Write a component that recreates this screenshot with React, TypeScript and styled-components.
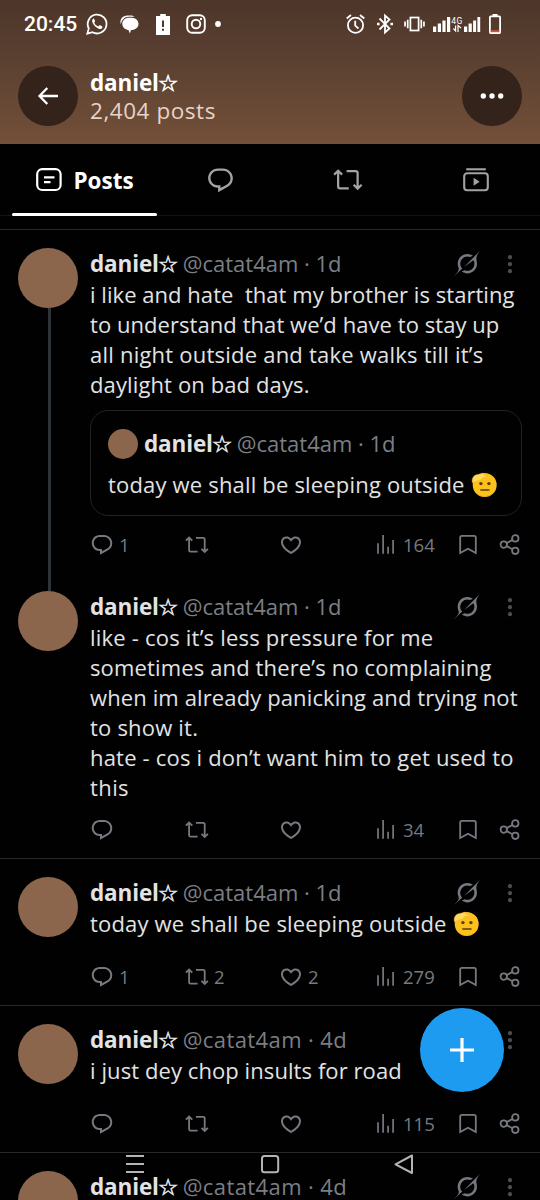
import React from "react";
import styled, { createGlobalStyle } from "styled-components";

const Global = createGlobalStyle`
  * { box-sizing: border-box; }
  html, body { margin: 0; padding: 0; background: #010101; }
  body { overflow: hidden; font-family: "Open Sans", "Noto Sans", sans-serif; }
  svg { display: block; flex: none; overflow: visible; }
  button { border: 0; padding: 0; background: none; color: inherit; font: inherit; }
`;

const Screen = styled.div`
  position: relative;
  width: 540px;
  height: 1200px;
  overflow: hidden;
  background: #010101;
  color: #e2e3e4;
`;

const Banner = styled.header`
  height: 144px;
  background: linear-gradient(#4c3529, #5a4031 40%, #735039);
  color: #fff;
`;

const StatusBar = styled.div`
  height: 48px;
  padding: 0 39px 0 24px;
  display: flex;
  align-items: center;
`;

const Clock = styled.span`
  width: 62px;
  padding-top: 1px;
  font: 500 21px/47px Roboto, sans-serif;
`;

const StatusSlot = styled.div<{ $width: number }>`
  width: ${(p) => p.$width}px;
`;

const Spacer = styled.div`
  flex: 1;
`;

const TitleRow = styled.div`
  padding: 18px 18px 0;
  display: flex;
  align-items: center;
`;

const RoundButton = styled.button`
  width: 60px;
  height: 60px;
  border-radius: 50%;
  background: #33231a;
  color: #fff;
  display: grid;
  place-items: center;
`;

const Titles = styled.div`
  flex: 1;
  padding: 1px 0 0 12px;
  line-height: 28px;
  height: 56px;
`;

const PostCount = styled.div`
  font-size: 22.5px;
  line-height: 27px;
  letter-spacing: 0.55px;
  color: #e6d3c9;
`;

const Tabs = styled.nav`
  height: 72px;
  display: grid;
  grid-template-columns: 156px 128px 128px 128px;
  border-bottom: 1px solid #121212;
  margin-bottom: 13px;
`;

const Tab = styled.div<{ $active?: boolean }>`
  position: relative;
  display: flex;
  align-items: center;
  justify-content: center;
  padding-left: ${(p) => (p.$active ? 14 : 0)}px;
  padding-top: 1px;
  gap: 11px;
  color: ${(p) => (p.$active ? "#fff" : "#a3a3a3")};
  font-size: 22.5px;
  font-weight: 700;
`;

const TabIndicator = styled.span`
  position: absolute;
  left: 12px;
  right: -1px;
  bottom: -1px;
  height: 3px;
  border-radius: 2px;
  background: #fff;
`;

const Post = styled.article<{ $continued?: boolean }>`
  display: flex;
  gap: 12px;
  padding: 0 18px 0;
  border-top: ${(p) => (p.$continued ? "0" : "1px solid #27282a")};
`;

const Rail = styled.div`
  width: 60px;
  padding-top: 18px;
  flex: none;
  display: flex;
  flex-direction: column;
  align-items: center;
`;

const Avatar = styled.div<{ $size: number }>`
  width: ${(p) => p.$size}px;
  height: ${(p) => p.$size}px;
  flex: none;
  border-radius: 50%;
  background: #8b664c;
`;

const ThreadLine = styled.div`
  flex: 1;
  width: 3px;
  margin-left: 3px;
  margin-bottom: -18px;
  background: #2f3336;
`;

const Body = styled.div`
  width: 432px;
  padding: 18px 0 16px;
`;

const NameRow = styled.div`
  height: 32px;
  display: flex;
  align-items: center;
  white-space: pre;
`;

const NameText = styled.span<{ $bright?: boolean }>`
  display: flex;
  align-items: center;
  font-size: 22.5px;
  line-height: 28px;
  font-weight: 700;
  letter-spacing: -0.15px;
  color: ${(p) => (p.$bright ? "#fff" : "#e2e3e4")};
`;

const Star = styled.span`
  width: 19px;
  margin-left: -1px;
  font: 400 23px/28px "DejaVu Sans", sans-serif;
  -webkit-text-stroke: 0.6px currentColor;
`;

const Handle = styled.span<{ $ls?: number }>`
  margin-left: 6px;
  padding-bottom: 2px;
  font-size: 22px;
  line-height: 28px;
  letter-spacing: ${(p) => p.$ls ?? 0}px;
  color: #7b7f85;
`;

const RowTools = styled.div`
  margin-left: auto;
  margin-right: 9px;
  padding-bottom: 1px;
  display: flex;
  align-items: center;
  gap: 27px;
  color: #767a80;
`;

const Line = styled.div<{ $ls?: number }>`
  height: 30px;
  padding-bottom: 2px;
  display: flex;
  align-items: center;
  font-size: 22px;
  line-height: 28px;
  white-space: pre;
  letter-spacing: ${(p) => p.$ls ?? 0}px;
`;

const QuoteCard = styled.div`
  margin-top: 10px;
  height: 106px;
  padding: 17px 17px 0;
  border: 1px solid #202224;
  border-radius: 18px;
`;

const QuoteAvatar = styled.div`
  margin-right: 6px;
`;

const QuoteText = styled.div`
  margin-top: 10px;
`;

const Actions = styled.div<{ $top: number }>`
  margin-top: ${(p) => p.$top}px;
  height: 24px;
  display: grid;
  grid-template-columns: 95px 94px 95px 82px 42px 24px;
  color: #767a80;
`;

const Action = styled.div`
  display: flex;
  align-items: center;
  gap: 5px;
  font-size: 18.5px;
  line-height: 24px;
`;

const Fab = styled.button`
  position: absolute;
  left: 420px;
  top: 1008px;
  width: 84px;
  height: 84px;
  border-radius: 50%;
  background: #1d9bf0;
  display: grid;
  place-items: center;
`;

const SystemNav = styled.div`
  position: absolute;
  left: 125px;
  right: 126px;
  bottom: 25px;
  display: flex;
  justify-content: space-between;
  color: #b4b4b4;
`;

type IconProps = { size?: number };

const ReplyIcon = ({ size = 24 }: IconProps) => (
  <svg width={size} height={size} viewBox="0 0 24 24" fill="currentColor">
    <path d="M1.751 10c0-4.42 3.584-8 8.005-8h4.366c4.49 0 8.129 3.64 8.129 8.13 0 2.96-1.607 5.68-4.196 7.11l-8.054 4.46v-3.69h-.067c-4.49.1-8.183-3.51-8.183-8.01zm8.005-6c-3.317 0-6.005 2.69-6.005 6 0 3.37 2.77 6.08 6.138 6.01l.351-.01h1.761v2.3l5.087-2.81c1.951-1.08 3.163-3.13 3.163-5.36 0-3.39-2.744-6.13-6.129-6.13H9.756z" />
  </svg>
);

const RepostIcon = ({ size = 24 }: IconProps) => (
  <svg width={size} height={size} viewBox="0 0 24 24" fill="none" stroke="currentColor" strokeWidth="1.8">
    <path d="M.9 7.7l3.2-3.1 3.2 3.1M4.1 5v12.2c0 .9.6 1.5 1.5 1.5h7" />
    <path d="M22.9 15.8l-3.2 3.1-3.2-3.1M19.7 18.5V6.3c0-.9-.6-1.5-1.5-1.5h-7.3" />
  </svg>
);

const HeartIcon = () => (
  <svg width="24" height="24" viewBox="0 0 24 24" fill="currentColor">
    <path d="M16.697 5.5c-1.222-.06-2.679.51-3.89 2.16l-.805 1.09-.806-1.09C9.984 6.01 8.526 5.44 7.304 5.5c-1.243.07-2.349.78-2.91 1.91-.552 1.12-.633 2.78.479 4.82 1.074 1.97 3.257 4.27 7.129 6.61 3.87-2.34 6.052-4.64 7.126-6.61 1.111-2.04 1.03-3.7.477-4.82-.561-1.13-1.666-1.84-2.908-1.91zm4.187 7.69c-1.351 2.48-4.001 5.12-8.379 7.67l-.503.3-.504-.3c-4.379-2.55-7.029-5.19-8.382-7.67-1.36-2.5-1.41-4.86-.514-6.67.887-1.79 2.647-2.91 4.601-3.01 1.651-.09 3.368.56 4.798 2.01 1.429-1.45 3.146-2.1 4.796-2.01 1.954.1 3.714 1.22 4.601 3.01.896 1.81.846 4.17-.514 6.67z" />
  </svg>
);

const ViewsIcon = () => (
  <svg width="24" height="24" viewBox="0 0 24 24" fill="none" stroke="currentColor" strokeWidth="1.7">
    <path d="M4 10.2v10.6M9.1 2v18.8M14.1 13.8v7M19.1 7v13.8" />
  </svg>
);

const BookmarkIcon = () => (
  <svg width="24" height="24" viewBox="0 0 24 24" fill="none" stroke="currentColor" strokeWidth="1.8">
    <path d="M4.2 20V4.6c0-1 .7-1.7 1.7-1.7h12.2c1 0 1.7.7 1.7 1.7V20L12 15.7z" />
  </svg>
);

const ShareIcon = () => (
  <svg width="24" height="24" viewBox="0 0 24 24" fill="none" stroke="currentColor" strokeWidth="1.8">
    <circle cx="5.8" cy="11.6" r="3.2" />
    <circle cx="17.3" cy="5.4" r="3.2" />
    <circle cx="17.3" cy="17.8" r="3.2" />
    <path d="M8.7 10.1l5.7-3.1M8.7 13.1l5.7 3.1" />
  </svg>
);

const GrokIcon = () => (
  <svg width="26" height="25" viewBox="0 0 33 32" fill="currentColor">
    <path d="M12.745 20.54l10.97-8.19c.539-.4 1.307-.244 1.564.38 1.349 3.288.746 7.241-1.938 9.955-2.683 2.714-6.417 3.31-9.83 1.954l-3.728 1.745c5.347 3.697 11.84 2.782 15.898-1.324 3.219-3.255 4.216-7.692 3.284-11.693l.008.009c-1.351-5.878.332-8.227 3.782-13.031L33 0l-4.54 4.59v-.014L12.743 20.544m-2.263 1.987c-3.837-3.707-3.175-9.446.1-12.755 2.42-2.449 6.388-3.448 9.852-1.979l3.72-1.737c-.67-.49-1.53-1.017-2.515-1.387-4.455-1.854-9.789-.931-13.41 2.728-3.483 3.523-4.579 8.94-2.697 13.561 1.405 3.454-.899 5.898-3.22 8.364C1.49 30.2.666 31.074 0 32l10.478-9.466" />
  </svg>
);

const KebabIcon = () => (
  <svg width="6" height="20" viewBox="0 0 6 20" fill="#4b4e52">
    <circle cx="3" cy="3.2" r="2.1" />
    <circle cx="3" cy="10.2" r="2.1" />
    <circle cx="3" cy="17.2" r="2.1" />
  </svg>
);

const PostsIcon = () => (
  <svg width="26" height="24" viewBox="0 0 26 24" fill="none" stroke="currentColor" strokeWidth="2.2">
    <rect x="1.2" y="1.2" width="23.4" height="20.8" rx="5" />
    <path d="M8 9.4h10.5M8 14.2h6.5" />
  </svg>
);

const MediaIcon = () => (
  <svg width="26" height="24" viewBox="0 0 26 24" fill="none" stroke="currentColor" strokeWidth="2.1">
    <path d="M3.200 1.300h19.600" />
    <rect x="1.2" y="5.3" width="23.6" height="17" rx="3" />
    <path d="M10.600 9.700v8l6-4z" fill="currentColor" stroke="none" />
  </svg>
);

const SaluteEmoji = () => (
  <svg width="27" height="26" viewBox="0 0 27 26">
    <circle cx="13.7" cy="14" r="12" fill="#fcc21b" />
    <path d="M3.500 20a12 12 0 0 0 21.400-2.200A12.400 12.400 0 0 1 3.500 20z" fill="#f2a412" />
    <circle cx="9.900" cy="12.600" r="1.700" fill="#5a3b10" />
    <circle cx="17.900" cy="12.600" r="1.700" fill="#5a3b10" />
    <path d="M9.800 19h8.200" stroke="#5a3b10" strokeWidth="1.400" strokeLinecap="round" />
    <path d="M1.500 11.800C.5 8.400 1.800 5.400 4.700 4L11.900 2.200c1.100-.1 1.400.8.600 1.300l2.800.9c.9.500.5 1.400-.4 1.500l-3 .6c-1.500 2.700-4 3.300-6.800 4z" fill="#ffd95a" stroke="#f0ae24" strokeWidth=".5" />
  </svg>
);

const WhatsAppIcon = () => (
  <svg width="22" height="22" viewBox="0 0 22 22" fill="none" stroke="currentColor">
    <path d="M1.300 20.700l1.500-5.300a9.400 9.400 0 1 1 3.700 3.800z" strokeWidth="1.800" />
    <path d="M7.400 5.600c-1.200.8-1.700 2.200-.9 4 1.200 2.900 3.300 5 6.200 6.100 1.800.6 3.100.1 3.700-1.300.2-.6.100-.9-.4-1.200l-1.900-.9c-.4-.2-.7-.1-1 .3l-.8 1c-1.900-.8-3.200-2-4.100-3.800l.7-1c.2-.3.2-.6.100-.9l-.8-1.900c-.2-.4-.4-.5-.8-.4z" fill="currentColor" stroke="none" />
  </svg>
);

const ChatIcon = () => (
  <svg width="19" height="20" viewBox="0 0 19 20" fill="currentColor">
    <path d="M.9 10.300C-.8 5.500 2.500 1.500 7.500 1.500h3c1.500 0 3 .5 4 1.300H8.500C4.500 2.800 1.600 6 .9 10.300z" />
    <path d="M8.700 3.700h3.100c3.800 0 6.700 2.800 6.700 6.100 0 3.500-2.800 6-6 6.100H11l-1.100 3.600-1.500-3.600C4.900 15.600 2.300 13 2.300 9.800c0-3.400 2.900-6.100 6.400-6.100z" />
  </svg>
);

const BatteryAlertIcon = () => (
  <svg width="14" height="21" viewBox="0 0 14 21">
    <path d="M4.200 0h5.600v2H14v19H0V2h4.200z" fill="#fff" />
    <path d="M7 6.500v6.500M7 14.800v2" stroke="#4f382b" strokeWidth="2" />
  </svg>
);

const InstagramIcon = () => (
  <svg width="20" height="20" viewBox="0 0 20 20" fill="none" stroke="currentColor" strokeWidth="1.900">
    <rect x="1.200" y="1.200" width="17.600" height="17.600" rx="5" />
    <circle cx="10" cy="10" r="4.300" />
    <circle cx="15" cy="5" r="1.200" fill="currentColor" stroke="none" />
  </svg>
);

const DotIcon = () => (
  <svg width="6" height="6" viewBox="0 0 6 6">
    <circle cx="3" cy="3" r="2.900" fill="#fff" />
  </svg>
);

const AlarmIcon = () => (
  <svg width="19" height="20" viewBox="0 0 19 20" fill="none" stroke="currentColor" strokeWidth="1.800">
    <circle cx="9.500" cy="11.200" r="7.600" />
    <path d="M9.200 6.800v4.900l3.300 2.800M.7 4.500L5 1M18.300 4.500L14 1" />
  </svg>
);

const BluetoothIcon = () => (
  <svg width="16" height="20" viewBox="0 0 16 20" fill="none" stroke="currentColor" strokeWidth="1.800">
    <path d="M2.500 4.500l10 10-4.500 4V1.500l4.500 4-10 10" />
    <path d="M0 10h2.600M13.400 10H16" strokeWidth="2.400" />
  </svg>
);

const VibrateIcon = () => (
  <svg width="21" height="18" viewBox="0 0 22 18" fill="none" stroke="currentColor" strokeWidth="1.800">
    <rect x="6.700" y="2.200" width="8.600" height="13.600" />
    <path d="M3.900 4.500v9M18.100 4.500v9M1.100 6.500v5M20.900 6.500v5" />
  </svg>
);

const SignalIcon = () => (
  <svg width="48" height="20" viewBox="0 0 48 20" fill="currentColor">
    <path d="M0 12.500h3.200v5.500H0zM4.800 9.500H8V18H4.800zM9.400 6.500h3.200V18H9.400zM14 3h3.200v15H14z" />
    <path d="M31 12.500h3.200v5.500H31zM35.600 9.500h3.200V18h-3.200zM40.100 6.500h3V18h-3zM44.400 3h2.800v15h-2.800z" />
    <text x="18.200" y="10" fontFamily="Roboto, sans-serif" fontSize="8.500" textLength="11">4G</text>
    <path d="M20.400 14.500l2.200 2.500v-5.500M25 18v-6.500l3 2.500" fill="none" stroke="currentColor" strokeWidth="1.200" />
  </svg>
);

const BatteryLowIcon = () => (
  <svg width="12" height="20" viewBox="0 0 12 20">
    <path d="M3.500 0h5v2h-5z" fill="#fff" />
    <rect x=".9" y="2.400" width="10.200" height="16.600" rx=".8" fill="none" stroke="#fff" strokeWidth="1.800" />
    <path d="M1.800 16.200h8.400v2H1.800z" fill="#c9563f" />
  </svg>
);

const BackIcon = () => (
  <svg width="20" height="18" viewBox="0 0 20 18" fill="none" stroke="currentColor" strokeWidth="2.300">
    <path d="M20 9H1.500M9.300 1L1.500 9l7.800 8" />
  </svg>
);

const MoreIcon = () => (
  <svg width="24" height="6" viewBox="0 0 24 6" fill="currentColor">
    <circle cx="3.300" cy="3" r="2.700" />
    <circle cx="12" cy="3" r="2.700" />
    <circle cx="20.700" cy="3" r="2.700" />
  </svg>
);

const PlusIcon = () => (
  <svg width="24" height="24" viewBox="0 0 24 24" stroke="#fff" strokeWidth="3.200">
    <path d="M0 12h24M12 0v24" />
  </svg>
);

const MenuKey = () => (
  <svg width="20" height="22" viewBox="0 0 20 22" stroke="currentColor" strokeWidth="2">
    <path d="M1 3h18M1 11h18M1 19h18" />
  </svg>
);

const HomeKey = () => (
  <svg width="20" height="22" viewBox="0 0 20 22" fill="none" stroke="currentColor" strokeWidth="2">
    <rect x="2" y="3" width="16.200" height="16.200" rx="2.500" />
  </svg>
);

const BackKey = () => (
  <svg width="20" height="22" viewBox="0 0 20 22" fill="none" stroke="currentColor" strokeWidth="2" strokeLinejoin="round">
    <path d="M18 2.500v17.500L1.500 11.300z" />
  </svg>
);

const Name = ({ bright }: { bright?: boolean }) => (
  <NameText $bright={bright}>
    daniel<Star>☆</Star>
  </NameText>
);

const PostHeader = ({ age, ls }: { age: string; ls?: number }) => (
  <NameRow>
    <Name />
    <Handle $ls={ls}>@catat4am · {age}</Handle>
    <RowTools>
      <GrokIcon />
      <KebabIcon />
    </RowTools>
  </NameRow>
);

type Counts = { replies?: string; reposts?: string; likes?: string; views: string };

const ActionBar = ({ top, replies, reposts, likes, views }: Counts & { top: number }) => (
  <Actions $top={top}>
    <Action><ReplyIcon />{replies}</Action>
    <Action><RepostIcon />{reposts}</Action>
    <Action><HeartIcon />{likes}</Action>
    <Action><ViewsIcon />{views}</Action>
    <Action><BookmarkIcon /></Action>
    <Action><ShareIcon /></Action>
  </Actions>
);

type TextLine = { text: string; ls?: number; salute?: boolean };

type PostData = {
  age: string;
  handleSpacing?: number;
  lines: TextLine[];
  counts: Counts;
  gap: number;
  thread?: boolean;
  continued?: boolean;
  quote?: { age: string; line: TextLine };
};

const TextRow = ({ line }: { line: TextLine }) => (
  <Line $ls={line.ls}>
    {line.text}
    {line.salute && <SaluteEmoji />}
  </Line>
);

const posts: PostData[] = [
  {
    age: "1d",
    thread: true,
    gap: 17,
    lines: [
      { text: "i like and hate  that my brother is starting", ls: 0.04 },
      { text: "to understand that we’d have to stay up", ls: 0.06 },
      { text: "all night outside and take walks till it’s", ls: 0.22 },
      { text: "daylight on bad days.", ls: 0.12 },
    ],
    quote: { age: "1d", line: { text: "today we shall be sleeping outside ", ls: 0.18, salute: true } },
    counts: { replies: "1", views: "164" },
  },
  {
    age: "1d",
    continued: true,
    gap: 15,
    lines: [
      { text: "like - cos it’s less pressure for me", ls: 0.21 },
      { text: "sometimes and there’s no complaining", ls: 0.14 },
      { text: "when im already panicking and trying not", ls: 0.12 },
      { text: "to show it.", ls: 0.2 },
      { text: "hate - cos i don’t want him to get used to", ls: 0.19 },
      { text: "this", ls: 0.4 },
    ],
    counts: { views: "34" },
  },
  {
    age: "1d",
    gap: 26,
    lines: [{ text: "today we shall be sleeping outside ", ls: 0.18, salute: true }],
    counts: { replies: "1", reposts: "2", likes: "2", views: "279" },
  },
  {
    age: "4d",
    handleSpacing: 0.4,
    gap: 26,
    lines: [{ text: "i just dey chop insults for road", ls: 0.08 }],
    counts: { views: "115" },
  },
];

const PostItem = ({ post }: { post: PostData }) => (
  <Post $continued={post.continued}>
    <Rail>
      <Avatar $size={60} />
      {post.thread && <ThreadLine />}
    </Rail>
    <Body>
      <PostHeader age={post.age} ls={post.handleSpacing} />
      {post.lines.map((line) => (
        <TextRow key={line.text} line={line} />
      ))}
      {post.quote && (
        <QuoteCard>
          <NameRow>
            <QuoteAvatar><Avatar $size={30} /></QuoteAvatar>
            <Name />
            <Handle>@catat4am · {post.quote.age}</Handle>
          </NameRow>
          <QuoteText>
            <TextRow line={post.quote.line} />
          </QuoteText>
        </QuoteCard>
      )}
      <ActionBar top={post.gap} {...post.counts} />
    </Body>
  </Post>
);

export default function App() {
  return (
    <Screen>
      <Global />
      <Banner>
        <StatusBar>
          <Clock>20:45</Clock>
          <StatusSlot $width={34}><WhatsAppIcon /></StatusSlot>
          <StatusSlot $width={36}><ChatIcon /></StatusSlot>
          <StatusSlot $width={30}><BatteryAlertIcon /></StatusSlot>
          <StatusSlot $width={29}><InstagramIcon /></StatusSlot>
          <StatusSlot $width={6}><DotIcon /></StatusSlot>
          <Spacer />
          <StatusSlot $width={31}><AlarmIcon /></StatusSlot>
          <StatusSlot $width={26.5}><BluetoothIcon /></StatusSlot>
          <StatusSlot $width={29.5}><VibrateIcon /></StatusSlot>
          <StatusSlot $width={56}><SignalIcon /></StatusSlot>
          <StatusSlot $width={12}><BatteryLowIcon /></StatusSlot>
        </StatusBar>
        <TitleRow>
          <RoundButton><BackIcon /></RoundButton>
          <Titles>
            <Name bright />
            <PostCount>2,404 posts</PostCount>
          </Titles>
          <RoundButton><MoreIcon /></RoundButton>
        </TitleRow>
      </Banner>
      <Tabs>
        <Tab $active><PostsIcon />Posts<TabIndicator /></Tab>
        <Tab><ReplyIcon size={29} /></Tab>
        <Tab><RepostIcon size={30} /></Tab>
        <Tab><MediaIcon /></Tab>
      </Tabs>
      {posts.map((post, i) => (
        <PostItem key={i} post={post} />
      ))}
      <Post>
        <Rail><Avatar $size={60} /></Rail>
        <Body><PostHeader age="4d" ls={0.4} /></Body>
      </Post>
      <Fab><PlusIcon /></Fab>
      <SystemNav>
        <MenuKey />
        <HomeKey />
        <BackKey />
      </SystemNav>
    </Screen>
  );
}
